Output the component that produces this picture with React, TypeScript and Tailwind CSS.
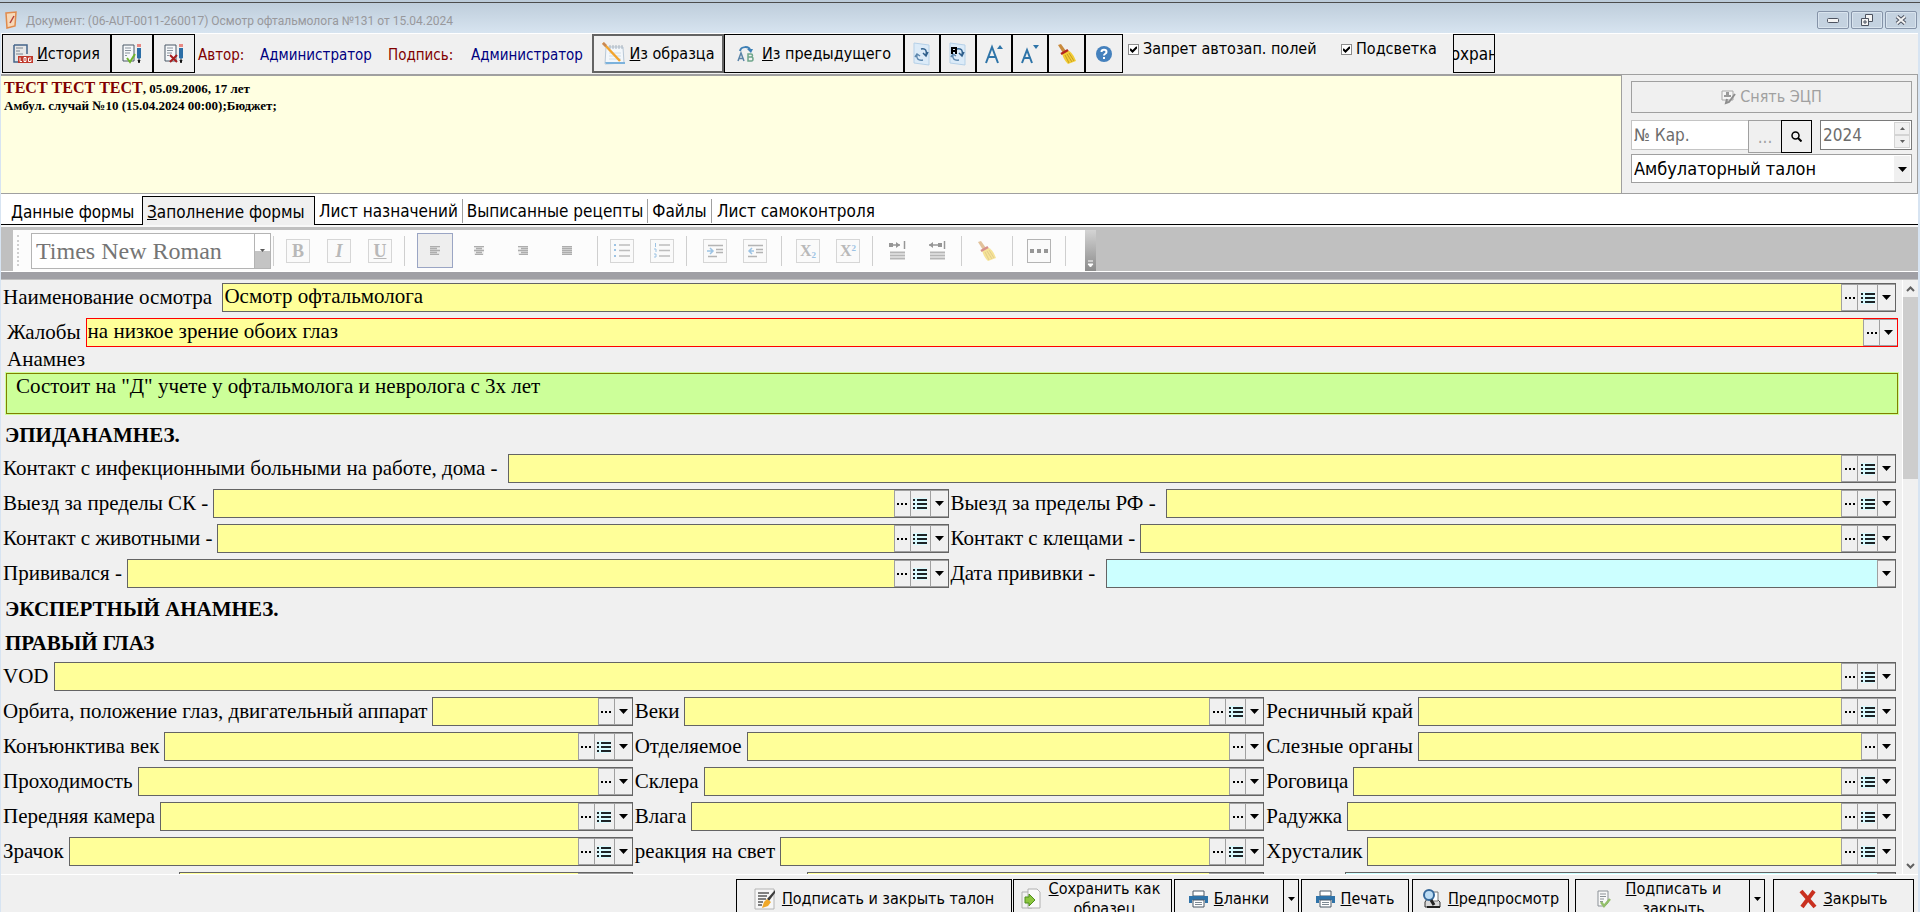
import { useId, useState } from "react";
import type { ReactNode } from "react";

const dialogFont = "font-['DejaVu_Sans_Condensed','Noto_Sans',sans-serif]";
const serifFont = "font-['Liberation_Serif',serif]";

type FieldProps = {
  label: string;
  value?: string;
  list?: boolean;
  dots?: boolean;
  tone?: "yellow" | "red" | "blue";
};

type ButtonProps = {
  children: ReactNode;
  className?: string;
  title?: string;
};

/* ---------- icons ---------- */

function ClipboardIcon() {
  return (
    <svg width="14" height="18" viewBox="0 0 14 18" aria-hidden="true">
      <path d="M2 2l10-1-1 14-8 2z" fill="#f7d9b8" stroke="#e08a4c" strokeWidth="1.500" />
      <path d="M10 5l-4 7" stroke="#b5423a" strokeWidth="1.500" />
    </svg>
  );
}

function LogIcon() {
  return (
    <svg width="20" height="20" viewBox="0 0 20 20" aria-hidden="true">
      <path d="M1 1h13v9M1 1v17h5" fill="none" stroke="#46658a" strokeWidth="1.500" />
      <path d="M3 4h7M3 7h4M3 10h7" stroke="#7a8590" />
      <rect x="5" y="12" width="15" height="7" fill="#c0392b" />
      <path d="M7 13.500v4h2M11 13.500h2v4h-2zM18 14h-2.500v3.500h2.500v-2" fill="none" stroke="#fff" />
    </svg>
  );
}

function SheetPenIcon({ mark }: { mark: "check" | "cross" }) {
  return (
    <svg width="20" height="20" viewBox="0 0 20 20" aria-hidden="true">
      <path d="M1 1h11v16H1z" fill="#f6f8fa" stroke="#4a5866" />
      <path d="M3 4h6M3 6.500h6M3 9h5M3 11.500h2" stroke="#8a949e" />
      <path d="M15 4h4v10l-2 1-2-1z" fill="#2c6ea6" />
      <path d="M15 0h4v3h-4z" fill="#e88983" />
      <path d="M16 16h2l-1 3z" fill="#111" stroke="#111" />
      {mark === "check" ? (
        <path d="M5 14l3 4 5-8" fill="none" stroke="#6fb52c" strokeWidth="2" />
      ) : (
        <path d="M6 11l7 7M13 11l-7 7" stroke="#a81f1f" strokeWidth="2" />
      )}
    </svg>
  );
}

function NotepadIcon() {
  return (
    <svg width="24" height="24" viewBox="0 0 24 24" aria-hidden="true">
      <path d="M4 5h17l1 16-19 1z" fill="#f3f7fb" stroke="#b9c8d6" />
      <path d="M3 20h20v2H4z" fill="#7cb2dc" />
      <path d="M8 3v4M11 3v4M14 3v4M17 3v4M20 3v4" stroke="#a9b4bf" />
      <path d="M7 11h12M7 14h12M7 17h12" stroke="#d2dde6" />
      <path d="M1 1l17 18" stroke="#f2a42e" strokeWidth="2.500" />
      <path d="M1 1l3 3" stroke="#c78755" strokeWidth="2.500" />
    </svg>
  );
}

function PreviousIcon() {
  return (
    <svg width="17" height="16" viewBox="0 0 17 16" aria-hidden="true">
      <path d="M3 5C4 0 12 0 13 4" fill="none" stroke="#3d7fb5" strokeWidth="2" />
      <path d="M10 3h6l-2 4z" fill="#3d7fb5" />
      <path d="M1 15l3-8 3 8M2 12.500h4" fill="none" stroke="#5b84a8" strokeWidth="1.500" />
      <path d="M11 8h3c2 0 2 3 0 3h-3zM11 11h3.500c2 0 2 4 0 4H11z" fill="none" stroke="#6ea58a" strokeWidth="1.500" />
    </svg>
  );
}

function RefreshSheetIcon({ bold }: { bold?: boolean }) {
  return (
    <svg width="18" height="24" viewBox="0 0 18 24" aria-hidden="true">
      <path d="M1 1l15 2v20L1 21z" fill="#dcebf8" stroke="#b6d1e8" />
      <path d="M8 7c5-1 6 2 5 6m-3-2l3 3 2-4" fill="none" stroke="#2f5f8c" strokeWidth="1.500" />
      <path d="M10 18c-5 1-7-2-6-5m-2 2l2-3 3 2" fill="none" stroke="#5d87ad" strokeWidth="1.500" />
      {bold && <path d="M3 12V6h4v6M3 9h4" fill="none" stroke="#000" strokeWidth="2" />}
    </svg>
  );
}

function FontSizeIcon({ up }: { up?: boolean }) {
  return up ? (
    <svg width="18" height="20" viewBox="0 0 18 20" aria-hidden="true">
      <path d="M1 19L7 3l6 16M3 13h8" fill="none" stroke="#2e74a8" strokeWidth="2" />
      <path d="M12 5l3-4 3 4z" fill="#2e74a8" />
    </svg>
  ) : (
    <svg width="18" height="20" viewBox="0 0 18 20" aria-hidden="true">
      <path d="M1 19L6 6l5 13M3 14h6" fill="none" stroke="#2e74a8" strokeWidth="2" />
      <path d="M12 1h6l-3 4z" fill="#2e74a8" />
    </svg>
  );
}

function BroomIcon({ faded }: { faded?: boolean }) {
  return (
    <svg width="20" height="22" viewBox="0 0 20 22" className={faded ? "opacity-50" : ""} aria-hidden="true">
      <path d="M1 2l3-1 5 7-3 2z" fill="#c98a3c" />
      <path d="M5 10l5-3c5 2 7 6 9 11l-8 3c-3-3-5-6-6-11z" fill="#f2cd35" />
      <path d="M8 12l4 8M10 11l5 8M12 10l5 8" stroke="#c79c22" />
      <path d="M4 11l7-4" stroke="#b3261e" strokeWidth="2.500" />
    </svg>
  );
}

function HelpIcon() {
  return (
    <svg width="16" height="16" viewBox="0 0 16 16" aria-hidden="true">
      <circle cx="8" cy="8" r="8" fill="#4581bd" />
      <path d="M5.500 6c0-3 5-3 5 0 0 2-2.500 1.500-2.500 3.500" fill="none" stroke="#fff" strokeWidth="2" />
      <path d="M7 11h2v2H7z" fill="#fff" />
    </svg>
  );
}

function CaretIcon() {
  return (
    <svg width="9" height="5" viewBox="0 0 9 5" aria-hidden="true">
      <path d="M0 0h9L4.500 5z" fill="#000" />
    </svg>
  );
}

function DotsIcon() {
  return (
    <svg width="10" height="2" viewBox="0 0 10 2" aria-hidden="true">
      <path d="M0 0h2v2H0zM4 0h2v2H4zM8 0h2v2H8z" fill="#000" />
    </svg>
  );
}

function ListIcon() {
  return (
    <svg width="14" height="12" viewBox="0 0 14 12" aria-hidden="true">
      <path d="M0 0h14v12H0z" fill="#d9fbff" />
      <path d="M0 1h2v2H0zM4 1h10v2H4zM0 5h2v2H0zM4 5h10v2H4zM0 9h2v2H0zM4 9h10v2H4z" fill="#1d2326" />
    </svg>
  );
}

function PrinterIcon() {
  return (
    <svg width="19" height="18" viewBox="0 0 19 18" aria-hidden="true">
      <path d="M4 1h11v5H4z" fill="#fff" stroke="#4a5866" />
      <path d="M0 6h19v7h-3v-3H3v3H0z" fill="#2f73a9" />
      <path d="M4 10h11v7H4z" fill="#fff" stroke="#4a5866" />
      <path d="M6 12.500h7M6 14.500h7" stroke="#7d8993" />
    </svg>
  );
}

function SignSheetIcon() {
  return (
    <svg width="22" height="22" viewBox="0 0 22 22" aria-hidden="true">
      <path d="M1 1h19v20H1z" fill="#f7f7f7" stroke="#b4b4b4" />
      <path d="M4 5h11M4 8h9M4 11h8M4 14h5M4 17h4" stroke="#5a5a5a" strokeWidth="1.500" />
      <path d="M21 2l-8 9 2 2 6-8z" fill="#3d3d3d" />
      <path d="M13 11l4 3-3 4-6 2 2-6z" fill="#f0a829" />
    </svg>
  );
}

function CopySheetIcon() {
  return (
    <svg width="20" height="22" viewBox="0 0 20 22" aria-hidden="true">
      <path d="M1 4h10v16H1z" fill="#f2f2f2" stroke="#b0b0b0" />
      <path d="M7 1h9l3 3v16H7z" fill="#fafafa" stroke="#b0b0b0" />
      <path d="M4 9h4V6l6 6-6 6v-3H4z" fill="#8cc63f" stroke="#4f8f1c" />
    </svg>
  );
}

function PreviewIcon() {
  return (
    <svg width="20" height="20" viewBox="0 0 20 20" aria-hidden="true">
      <path d="M3 13l2-3h10l3 3v5H3z" fill="#d9d9d9" stroke="#333" />
      <path d="M10 3h6v9h-6z" fill="#fff" stroke="#777" />
      <circle cx="7" cy="6" r="5" fill="#bcdcf4" stroke="#37699b" strokeWidth="2" />
      <path d="M9 11l3 5" stroke="#222" strokeWidth="3" />
      <path d="M5 18h13" stroke="#222" strokeWidth="2" />
    </svg>
  );
}

function SheetCheckIcon() {
  return (
    <svg width="14" height="18" viewBox="0 0 14 18" aria-hidden="true">
      <path d="M1 1h10v12l-3 3H1z" fill="#f8f8f8" stroke="#8b9197" />
      <path d="M3 4h6M3 6.500h6M3 9h4M3 11.500h3" stroke="#8b9197" />
      <path d="M4 12l3 4 6-7" fill="none" stroke="#93bf6a" strokeWidth="2.500" />
    </svg>
  );
}

function CrossIcon() {
  return (
    <svg width="18" height="20" viewBox="0 0 18 20" aria-hidden="true">
      <path d="M2 2l14 16M15 2L3 18" stroke="#c9301f" strokeWidth="4" />
    </svg>
  );
}

/* ---------- small controls ---------- */

function ToolButton({ children, className = "w-9", title }: ButtonProps) {
  return (
    <button
      type="button"
      aria-label={title}
      className={`flex h-full shrink-0 items-center justify-center overflow-hidden whitespace-nowrap border border-black ${className}`}
    >
      {children}
    </button>
  );
}

function WindowButton({ children, title }: ButtonProps) {
  return (
    <button
      type="button"
      aria-label={title}
      className="flex h-[18px] w-8 items-center justify-center rounded-xs border border-[#8593a8] bg-[#c4d2e0] shadow-[inset_0_0_0_1px_#d9e4ee]"
    >
      {children}
    </button>
  );
}

function CheckOption({ label }: { label: string }) {
  const [checked, setChecked] = useState(true);
  return (
    <label className="flex h-[26px] items-center gap-1 whitespace-nowrap">
      <span className="grid size-[11px] place-items-center">
        <input
          type="checkbox"
          checked={checked}
          onChange={() => setChecked(!checked)}
          className="col-start-1 row-start-1 size-[11px] appearance-none border border-[#8c8c8c] bg-white"
        />
        {checked && (
          <svg width="7" height="7" viewBox="0 0 7 7" className="pointer-events-none col-start-1 row-start-1" aria-hidden="true">
            <path d="M0 3l2.500 2.500L7 1" fill="none" stroke="#000" strokeWidth="2" />
          </svg>
        )}
      </span>
      {label}
    </label>
  );
}

function FieldButton({ children, className, title }: ButtonProps) {
  return (
    <button
      type="button"
      aria-label={title}
      className={`flex shrink-0 items-center justify-center border border-r-0 border-[#a0a0a0] bg-[#f0f0f0] ${className}`}
    >
      {children}
    </button>
  );
}

const fieldTones = {
  yellow: "border-[#646464] bg-[#ffff99]",
  red: "border-[#ff0000] bg-[#ffff99]",
  blue: "border-[#646464] bg-[#ccffff]",
};

function Field({ label, value = "", list = true, dots = true, tone = "yellow" }: FieldProps) {
  const id = useId();
  return (
    <div className="flex min-w-0 flex-1 gap-[5px] pl-0.5">
      <label htmlFor={id} className="shrink-0 whitespace-pre leading-[29px]">
        {label}
      </label>
      <div className={`flex h-[29px] min-w-0 flex-1 border ${fieldTones[tone]}`}>
        <input id={id} defaultValue={value} className="min-w-0 flex-1 pb-0.5 pl-px leading-[25px] outline-none" />
        {dots && (
          <FieldButton title="Выбрать" className="w-4">
            <DotsIcon />
          </FieldButton>
        )}
        {list && (
          <FieldButton title="Список" className="w-5">
            <ListIcon />
          </FieldButton>
        )}
        <FieldButton title="Раскрыть" className="w-[18px] border-r">
          <CaretIcon />
        </FieldButton>
      </div>
    </div>
  );
}

function FieldRow({ fields }: { fields: FieldProps[] }) {
  return (
    <div className="mb-1.5 flex">
      {fields.map((field) => (
        <Field key={field.label} {...field} />
      ))}
    </div>
  );
}

function FormHeading({ children }: { children: ReactNode }) {
  return <h2 className="h-[34px] pl-1 font-bold leading-[30px]">{children}</h2>;
}

/* ---------- page parts ---------- */

function TitleBar() {
  return (
    <header className="flex h-[33px] flex-col bg-linear-to-b from-[#bccbd9] to-[#d7e4f0]">
      <div className="h-[3px] border-b border-[#4c4c4c]" />
      <div className="flex flex-1 items-center pt-1 pr-[3px] pl-1">
        <ClipboardIcon />
        <h1 className="ml-2 flex-1 pt-0.5 font-['Roboto','Noto_Sans',sans-serif] text-xs text-[#98989c]">
          Документ: (06-AUT-0011-260017) Осмотр офтальмолога №131 от 15.04.2024
        </h1>
        <div className="flex gap-0.5">
          <WindowButton title="Свернуть">
            <svg width="12" height="6" viewBox="0 0 12 6" aria-hidden="true">
              <rect x="0.500" y="1.500" width="11" height="4" rx="1" fill="#f4f4f4" stroke="#4d5360" />
            </svg>
          </WindowButton>
          <WindowButton title="Развернуть">
            <svg width="12" height="12" viewBox="0 0 12 12" aria-hidden="true">
              <path d="M4.500 0.500h7v7h-7z" fill="#f4f4f4" stroke="#4d5360" />
              <path d="M0.500 4.500h7v7h-7z" fill="#f4f4f4" stroke="#4d5360" />
              <path d="M3 7h2v2H3z" fill="#f4f4f4" stroke="#4d5360" />
            </svg>
          </WindowButton>
          <WindowButton title="Закрыть окно">
            <svg width="12" height="10" viewBox="0 0 12 10" aria-hidden="true">
              <path d="M2 1.500l8 7M10 1.500l-8 7" stroke="#4d5360" strokeWidth="4" />
              <path d="M2 1.500l8 7M10 1.500l-8 7" stroke="#f4f4f4" strokeWidth="2" />
            </svg>
          </WindowButton>
        </div>
      </div>
    </header>
  );
}

function MainToolbar() {
  return (
    <div className="flex h-[42px] items-start border-t border-b border-t-white border-b-[#a0a0a0] pl-px">
      <div className="flex h-[39px] items-center">
        <ToolButton className="w-[109px] gap-1 bg-[#e7e7e7]">
          <LogIcon />
          <span>
            <u>И</u>стория
          </span>
        </ToolButton>
        <ToolButton className="w-[42px]" title="Подписать">
          <SheetPenIcon mark="check" />
        </ToolButton>
        <ToolButton className="w-[42px]" title="Снять подпись">
          <SheetPenIcon mark="cross" />
        </ToolButton>
        <dl className="flex whitespace-nowrap pt-0.5 pl-[3px] text-[15px]">
          <dt className="w-[62px] text-[#800000]">Автор:</dt>
          <dd className="w-32 text-[#000080]">Администратор</dd>
          <dt className="w-[83px] text-[#800000]">Подпись:</dt>
          <dd className="w-[121px] text-[#000080]">Администратор</dd>
        </dl>
        <ToolButton className="w-[132px] gap-1 border-2 border-[#646464]!">
          <NotepadIcon />
          <span>
            <u>И</u>з образца
          </span>
        </ToolButton>
        <ToolButton className="w-[180px] gap-2">
          <PreviousIcon />
          <span>
            <u>И</u>з предыдущего
          </span>
        </ToolButton>
        <ToolButton title="Обновить">
          <RefreshSheetIcon />
        </ToolButton>
        <ToolButton title="Обновить все">
          <RefreshSheetIcon bold />
        </ToolButton>
        <ToolButton title="Увеличить шрифт">
          <FontSizeIcon up />
        </ToolButton>
        <ToolButton title="Уменьшить шрифт">
          <FontSizeIcon />
        </ToolButton>
        <ToolButton className="w-[37px]" title="Очистить">
          <BroomIcon />
        </ToolButton>
        <ToolButton className="w-[38px]" title="Справка">
          <HelpIcon />
        </ToolButton>
      </div>
      <div className="flex pt-0.5 pl-[5px]">
        <div className="w-[213px]">
          <CheckOption label="Запрет автозап. полей" />
        </div>
        <div className="w-28">
          <CheckOption label="Подсветка" />
        </div>
      </div>
      <div className="h-[39px] text-[17px]">
        <ToolButton className="w-[42px]">
          <span>
            <u>С</u>охрани
          </span>
        </ToolButton>
      </div>
    </div>
  );
}

function TalonPanel() {
  return (
    <div className="flex w-[297px] shrink-0 flex-col border-r border-b border-l border-[#a0a0a0] pt-1.5 pr-[5px] pl-[9px]">
      <button
        type="button"
        disabled
        className="flex h-8 items-center justify-center gap-1 border border-[#a0a0a0] text-[#a0a0a0]"
      >
        <svg width="15" height="15" viewBox="0 0 15 15" aria-hidden="true">
          <path d="M1 1h11v9H1z" fill="#f5f5f5" stroke="#a8a8a8" />
          <path d="M5 2h3v3h2v2H3V5h2z" fill="#9a9a9a" />
          <path d="M14 4l-6 8-3 1 1-4" fill="none" stroke="#8d8d8d" strokeWidth="2" />
        </svg>
        Снять ЭЦП
      </button>
      <div className="mt-[7px] flex h-[34px] items-start text-[17px]">
        <input
          aria-label="Номер карты"
          placeholder="№ Кар."
          className="h-[30px] min-w-0 flex-1 border border-r-0 border-[#c4c4c4] bg-white pl-0.5 placeholder:text-[#6d6d6d]"
        />
        <button type="button" disabled className="h-[33px] w-[33px] border border-r-0 border-[#a0a0a0] text-[#a0a0a0]">
          ...
        </button>
        <button
          type="button"
          aria-label="Найти"
          className="flex h-[33px] w-[31px] items-center justify-center border border-black"
        >
          <svg width="11" height="11" viewBox="0 0 11 11" aria-hidden="true">
            <circle cx="4.500" cy="4.500" r="3.500" fill="none" stroke="#000" strokeWidth="1.500" />
            <path d="M7 7l3.500 3.500" stroke="#000" strokeWidth="2" />
          </svg>
        </button>
        <div className="ml-2 flex h-[30px] w-[92px] border border-[#7a7a7a] bg-white p-px">
          <input aria-label="Год" defaultValue="2024" className="min-w-0 flex-1 pl-px text-[#6d6d6d]" />
          <div className="flex flex-col">
            <button type="button" aria-label="Больше" className="flex w-4 flex-1 items-center justify-center border border-[#d4d4d4] bg-[#f0f0f0]">
              <svg width="5" height="3" viewBox="0 0 5 3" aria-hidden="true">
                <path d="M0 3h5L2.500 0z" fill="#606060" />
              </svg>
            </button>
            <button type="button" aria-label="Меньше" className="flex w-4 flex-1 items-center justify-center border border-[#d4d4d4] bg-[#f0f0f0]">
              <svg width="5" height="3" viewBox="0 0 5 3" aria-hidden="true">
                <path d="M0 0h5L2.500 3z" fill="#606060" />
              </svg>
            </button>
          </div>
        </div>
      </div>
      <div className="grid h-[29px] items-stretch border border-[#a0a0a0] bg-white text-lg">
        <select aria-label="Вид талона" className="col-start-1 row-start-1 appearance-none pl-0.5">
          <option>Амбулаторный талон</option>
        </select>
        <span className="pointer-events-none col-start-1 row-start-1 my-px mr-px flex w-4 items-center justify-center justify-self-end bg-[#f0f0f0]">
          <CaretIcon />
        </span>
      </div>
    </div>
  );
}

function PatientPanel() {
  return (
    <section className="flex h-[119px]">
      <div className={`flex-1 border-t border-b border-[#a0a0a0] bg-[#ffffe1] pt-[3px] pl-[3px] text-[13px] font-bold leading-[17px] ${serifFont}`}>
        <p>
          <span className="text-base leading-[17px] text-[#800000]">ТЕСТ ТЕСТ ТЕСТ</span>, 05.09.2006, 17 лет
        </p>
        <p>Амбул. случай №10 (15.04.2024 00:00);Бюджет;</p>
      </div>
      <TalonPanel />
    </section>
  );
}

function Tabs() {
  return (
    <nav className="flex h-[33px] shrink-0 flex-col bg-[#f8f8f8] text-[17px]">
      <div role="tablist" className="flex h-[31px] items-end bg-white pt-0.5">
        <button type="button" role="tab" className="h-full w-[141px] border-b border-black pt-1 pl-2.5 text-left whitespace-nowrap">
          <u>Д</u>анные формы
        </button>
        <button
          type="button"
          role="tab"
          aria-selected="true"
          className="h-full w-[173px] border border-b-0 border-black bg-[#f0f0f0] pt-0.5 pl-1 text-left whitespace-nowrap"
        >
          <u>З</u>аполнение формы
        </button>
        <div className="flex h-full flex-1 items-center border-b border-black pt-0.5 whitespace-nowrap">
          <button type="button" role="tab" className="h-6 w-[148px] border-r border-[#a0a0a0]">
            Лист назначений
          </button>
          <button type="button" role="tab" className="h-6 w-[185px] border-r border-[#a0a0a0]">
            Выписанные рецепты
          </button>
          <button type="button" role="tab" className="h-6 w-16 border-r border-[#a0a0a0]">
            Файлы
          </button>
          <button type="button" role="tab" className="h-6 w-[168px]">
            Лист самоконтроля
          </button>
        </div>
      </div>
    </nav>
  );
}

function EditButton({ children, title, className = "border-[#d6d6d6]" }: ButtonProps) {
  return (
    <button
      type="button"
      disabled
      aria-label={title}
      className={`flex size-6 items-center justify-center border bg-[#fafafa] text-lg font-bold leading-5 text-[#b8b8b8] ${className}`}
    >
      {children}
    </button>
  );
}

function PlainButton({ children, title, className = "" }: ButtonProps) {
  return (
    <button type="button" disabled aria-label={title} className={`flex h-[35px] w-9 items-center justify-center ${className}`}>
      {children}
    </button>
  );
}

function Separator() {
  return <span className="h-[30px] w-px bg-[#cfcfcf]" />;
}

function AlignIcon({ d }: { d: string }) {
  return (
    <svg width="10" height="9" viewBox="0 0 10 9" aria-hidden="true">
      <path d="M0 0h10v9H0z" fill="#e6e6e6" opacity="0.500" />
      <path d={d} stroke="#adadad" strokeWidth="1.500" />
    </svg>
  );
}

function IndentIcon({ out }: { out?: boolean }) {
  return (
    <svg width="17" height="14" viewBox="0 0 17 14" aria-hidden="true">
      <path d="M1 1.500h15M9 5.500h7M9 8.500h7M1 12.500h9" stroke="#b4b4b4" strokeWidth="1.500" />
      <path d={out ? "M7 7H2m3-3L2 7l3 3" : "M0 7h6M3 4l3 3-3 3"} fill="none" stroke="#9cc3e4" strokeWidth="1.500" />
    </svg>
  );
}

function SpacingIcon({ inward }: { inward?: boolean }) {
  return (
    <svg width="18" height="19" viewBox="0 0 18 19" aria-hidden="true">
      <path d="M1 4h11M16.500 0v8" stroke="#969696" strokeWidth="1.500" />
      <path d={inward ? "M1 4l4-3v6zM10 2h4v4h-4z" : "M12 4L8 1v6zM1 2h4v4H1z"} fill="#969696" />
      <path d="M2 11.500h15M2 14.500h15M2 17.500h15" stroke="#b6b6b6" strokeWidth="2" />
    </svg>
  );
}

function EditorToolbar() {
  return (
    <div className={`flex h-[53px] shrink-0 flex-col bg-[#c0c0c0] ${serifFont}`}>
      <div className="flex h-[45px] items-end border-b border-white pt-[3px]">
        <div className="ml-3 flex h-[41px] w-[1072px] items-center bg-[#fcfcfc]">
          <span className="ml-1 h-[31px] w-0.5 border-l-2 border-dotted border-[#cfcfcf]" />
          <div className="ml-3 grid h-9 w-60 border border-[#b4b4b4] bg-white">
            <select disabled aria-label="Шрифт" className="col-start-1 row-start-1 appearance-none pl-1 text-2xl text-[#757575] opacity-100">
              <option>Times New Roman</option>
            </select>
            <span className="pointer-events-none col-start-1 row-start-1 flex w-4 items-center justify-center justify-self-end border-l border-[#b4b4b4] bg-linear-to-b from-white from-50% to-[#c4c4c4] to-50%">
              <svg width="5" height="3" viewBox="0 0 5 3" aria-hidden="true">
                <path d="M0 0h5L2.500 3z" fill="#5a5a5a" />
              </svg>
            </span>
          </div>
          <div className="flex flex-1 items-center pl-0.5">
            <Separator />
            <div className="flex gap-[17px] px-3">
              <EditButton>B</EditButton>
              <EditButton className="border-[#d6d6d6] italic">I</EditButton>
              <EditButton className="border-[#d6d6d6] underline">U</EditButton>
            </div>
            <Separator />
            <div className="flex gap-2 px-3">
              <PlainButton title="По левому краю" className="border border-[#9aa5c4] bg-[#eeeeee]">
                <AlignIcon d="M0 .5h10M0 2.500h7M0 4.500h10M0 6.500h7M0 8.500h9" />
              </PlainButton>
              <PlainButton title="По центру">
                <AlignIcon d="M0 .5h10M2 2.500h6M0 4.500h10M2 6.500h6M1 8.500h8" />
              </PlainButton>
              <PlainButton title="По правому краю">
                <AlignIcon d="M0 .5h10M3 2.500h7M0 4.500h10M3 6.500h7M1 8.500h9" />
              </PlainButton>
              <PlainButton title="По ширине">
                <AlignIcon d="M0 .5h10M0 2.500h10M0 4.500h10M0 6.500h10M0 8.500h10" />
              </PlainButton>
            </div>
            <Separator />
            <div className="flex gap-4 px-3">
              <EditButton title="Маркированный список">
                <svg width="16" height="15" viewBox="0 0 16 15" aria-hidden="true">
                  <path d="M5 2h11M5 7.500h11M5 13h11" stroke="#bdbdbd" strokeWidth="1.500" />
                  <path d="M0 1h2v2H0zM0 6h2v2H0zM0 12h2v2H0z" fill="#9cc3e4" />
                </svg>
              </EditButton>
              <EditButton title="Нумерованный список">
                <svg width="16" height="15" viewBox="0 0 16 15" aria-hidden="true">
                  <path d="M5 2h11M5 7.500h11M5 13h11" stroke="#bdbdbd" strokeWidth="1.500" />
                  <path d="M1.500 0v4M0 6h2v3M0 11h2v3H0" fill="none" stroke="#9cc3e4" />
                </svg>
              </EditButton>
            </div>
            <Separator />
            <div className="flex gap-4 pr-3.5 pl-4">
              <EditButton title="Увеличить отступ">
                <IndentIcon />
              </EditButton>
              <EditButton title="Уменьшить отступ">
                <IndentIcon out />
              </EditButton>
            </div>
            <Separator />
            <div className="flex gap-4 pr-3 pl-3.5">
              <EditButton>
                <span className="text-base leading-5">
                  X<sub className="text-[9px] text-[#9cc3e4]">2</sub>
                </span>
              </EditButton>
              <EditButton>
                <span className="text-base leading-5">
                  X<sup className="text-[9px] text-[#9cc3e4]">2</sup>
                </span>
              </EditButton>
            </div>
            <Separator />
            <div className="flex gap-1 px-1.5">
              <PlainButton title="Увеличить интервал">
                <SpacingIcon />
              </PlainButton>
              <PlainButton title="Уменьшить интервал">
                <SpacingIcon inward />
              </PlainButton>
            </div>
            <Separator />
            <PlainButton title="Очистить формат" className="mx-[7px]">
              <BroomIcon faded />
            </PlainButton>
            <Separator />
            <div className="px-3.5">
              <EditButton title="Дополнительно" className="border-[#b4b4b4]">
                <svg width="19" height="4" viewBox="0 0 19 4" aria-hidden="true">
                  <path d="M0 0h4v4H0zM7 0h4v4H7zM14 0h4v4h-4z" fill="#969696" />
                </svg>
              </EditButton>
            </div>
            <Separator />
          </div>
        </div>
        <div className="flex h-[41px] w-[11px] flex-col items-center justify-end bg-linear-to-b from-[#d4d4d4] to-[#8c8c8c] pb-1">
          <svg width="7" height="7" viewBox="0 0 7 7" aria-hidden="true">
            <path d="M1 1h5M1 4h5L3.500 7z" stroke="#fff" fill="#fff" />
          </svg>
        </div>
      </div>
      <div className="h-[7px] bg-[#a0a0a5]" />
    </div>
  );
}

const contactRows: FieldProps[][] = [
  [{ label: "Контакт с инфекционными больными на работе, дома - " }],
  [{ label: "Выезд за пределы СК -" }, { label: "Выезд за пределы РФ - " }],
  [{ label: "Контакт с животными -" }, { label: "Контакт с клещами -" }],
  [{ label: "Прививался -" }, { label: "Дата прививки - ", tone: "blue", dots: false, list: false }],
];

const rightEyeRows: FieldProps[][] = [
  [{ label: "VOD" }],
  [{ label: "Орбита, положение глаз, двигательный аппарат", list: false }, { label: "Веки" }, { label: "Ресничный край" }],
  [{ label: "Конъюнктива век" }, { label: "Отделяемое", list: false }, { label: "Слезные органы", list: false }],
  [{ label: "Проходимость", list: false }, { label: "Склера", list: false }, { label: "Роговица" }],
  [{ label: "Передняя камера" }, { label: "Влага", list: false }, { label: "Радужка" }],
  [{ label: "Зрачок" }, { label: "реакция на свет" }, { label: "Хрусталик" }],
  [
    { label: "Стекловидное тело" },
    { label: "Глазное дно (ДЗН)" },
    { label: "Осмотр:", tone: "blue", dots: false, list: false },
  ],
];

function ExamForm() {
  const id = useId();
  return (
    <main className="flex min-h-0 flex-1">
      <form className={`min-w-0 flex-1 overflow-hidden pt-[3px] text-[21px] ${serifFont}`}>
        <div className="pr-1.5">
          <FieldRow fields={[{ label: "Наименование осмотра ", value: "Осмотр офтальмолога" }]} />
        </div>
        <div className="flex pr-1 pl-1">
          <Field label="Жалобы" value="на низкое зрение обоих глаз" list={false} tone="red" />
        </div>
        <label htmlFor={id} className="block h-[25px] pl-1.5 leading-[25px]">
          Анамнез
        </label>
        <div className="mr-[3px] mb-[5px] ml-1 flex bg-[#ccff99] p-px">
          <textarea
            id={id}
            rows={1}
            defaultValue={'Состоит на "Д" учете у офтальмолога и невролога с 3х лет'}
            className="h-[41px] flex-1 resize-none overflow-hidden border border-[#808000] pl-[9px] leading-6 outline-none"
          />
        </div>
        <div className="pr-1.5">
          <FormHeading>ЭПИДАНАМНЕЗ.</FormHeading>
          {contactRows.map((fields) => (
            <FieldRow key={fields[0].label} fields={fields} />
          ))}
          <FormHeading>ЭКСПЕРТНЫЙ АНАМНЕЗ.</FormHeading>
          <FormHeading>ПРАВЫЙ ГЛАЗ</FormHeading>
          {rightEyeRows.map((fields) => (
            <FieldRow key={fields[0].label} fields={fields} />
          ))}
        </div>
      </form>
      <div className="flex w-4 flex-col items-center border-l border-white">
        <svg width="15" height="17" viewBox="0 0 15 17" className="shrink-0" aria-hidden="true">
          <path d="M4 11l3.500-3.500L11 11" fill="none" stroke="#606060" strokeWidth="2" />
        </svg>
        <div className="h-[182px] w-full bg-[#cdcdcd]" />
        <div className="flex-1" />
        <svg width="15" height="17" viewBox="0 0 15 17" className="shrink-0" aria-hidden="true">
          <path d="M4 7l3.500 3.500L11 7" fill="none" stroke="#606060" strokeWidth="2" />
        </svg>
      </div>
    </main>
  );
}

function FooterButton({ children, className }: ButtonProps) {
  return (
    <button
      type="button"
      className={`flex h-10 items-center justify-center border border-black leading-5 ${className}`}
    >
      {children}
    </button>
  );
}

function SplitArrow() {
  return (
    <button type="button" aria-label="Ещё" className="flex h-10 w-[15px] items-center justify-center border border-l-0 border-black">
      <svg width="7" height="4" viewBox="0 0 7 4" aria-hidden="true">
        <path d="M0 0h7L3.500 4z" fill="#000" />
      </svg>
    </button>
  );
}

function FooterBar() {
  return (
    <footer className="flex h-[38px] shrink-0 items-start justify-end overflow-hidden border-t border-white pt-1 pr-1">
      <FooterButton className="w-[276px] gap-1.5">
        <SignSheetIcon />
        <span>
          <u>П</u>одписать и закрыть талон
        </span>
      </FooterButton>
      <FooterButton className="ml-px w-[159px] gap-1">
        <CopySheetIcon />
        <span className="w-[120px]">
          <u>С</u>охранить как образец
        </span>
      </FooterButton>
      <div className="ml-0.5 flex">
        <FooterButton className="w-[110px] gap-1.5">
          <PrinterIcon />
          <span>
            <u>Б</u>ланки
          </span>
        </FooterButton>
        <SplitArrow />
      </div>
      <FooterButton className="ml-0.5 w-[108px] gap-1.5">
        <PrinterIcon />
        <span>
          <u>П</u>ечать
        </span>
      </FooterButton>
      <FooterButton className="ml-[3px] w-[157px] gap-1.5">
        <PreviewIcon />
        <span>
          <u>П</u>редпросмотр
        </span>
      </FooterButton>
      <div className="ml-1.5 flex">
        <FooterButton className="w-[175px] gap-2">
          <SheetCheckIcon />
          <span className="w-[110px]">
            <u>П</u>одписать и закрыть
          </span>
        </FooterButton>
        <SplitArrow />
      </div>
      <FooterButton className="ml-2 w-[141px] gap-1.5">
        <CrossIcon />
        <span>
          <u>З</u>акрыть
        </span>
      </FooterButton>
    </footer>
  );
}

export default function App() {
  return (
    <div className={`flex h-screen flex-col overflow-hidden bg-[#f0f0f0] text-base leading-6 text-black ${dialogFont}`}>
      <TitleBar />
      <div className="flex min-h-0 flex-1 flex-col border-r-2 border-l border-[#d7e4f2]">
        <MainToolbar />
        <PatientPanel />
        <Tabs />
        <EditorToolbar />
        <ExamForm />
        <FooterBar />
      </div>
    </div>
  );
}
